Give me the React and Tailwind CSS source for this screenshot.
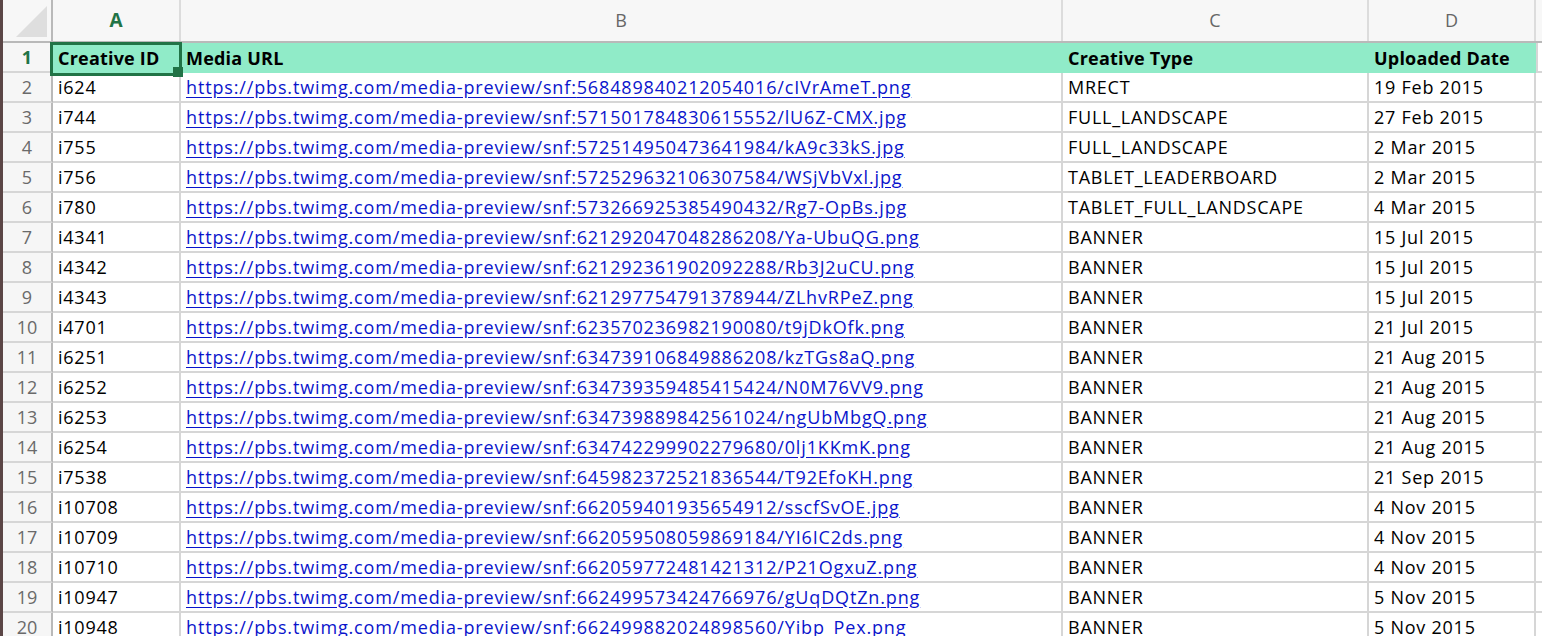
import React from "react";

const rows = [
  ["i624", "568489840212054016/cIVrAmeT.png", "MRECT", "19 Feb 2015"],
  ["i744", "571501784830615552/lU6Z-CMX.jpg", "FULL_LANDSCAPE", "27 Feb 2015"],
  ["i755", "572514950473641984/kA9c33kS.jpg", "FULL_LANDSCAPE", "2 Mar 2015"],
  ["i756", "572529632106307584/WSjVbVxl.jpg", "TABLET_LEADERBOARD", "2 Mar 2015"],
  ["i780", "573266925385490432/Rg7-OpBs.jpg", "TABLET_FULL_LANDSCAPE", "4 Mar 2015"],
  ["i4341", "621292047048286208/Ya-UbuQG.png", "BANNER", "15 Jul 2015"],
  ["i4342", "621292361902092288/Rb3J2uCU.png", "BANNER", "15 Jul 2015"],
  ["i4343", "621297754791378944/ZLhvRPeZ.png", "BANNER", "15 Jul 2015"],
  ["i4701", "623570236982190080/t9jDkOfk.png", "BANNER", "21 Jul 2015"],
  ["i6251", "634739106849886208/kzTGs8aQ.png", "BANNER", "21 Aug 2015"],
  ["i6252", "634739359485415424/N0M76VV9.png", "BANNER", "21 Aug 2015"],
  ["i6253", "634739889842561024/ngUbMbgQ.png", "BANNER", "21 Aug 2015"],
  ["i6254", "634742299902279680/0lj1KKmK.png", "BANNER", "21 Aug 2015"],
  ["i7538", "645982372521836544/T92EfoKH.png", "BANNER", "21 Sep 2015"],
  ["i10708", "662059401935654912/sscfSvOE.jpg", "BANNER", "4 Nov 2015"],
  ["i10709", "662059508059869184/YI6IC2ds.png", "BANNER", "4 Nov 2015"],
  ["i10710", "662059772481421312/P21OgxuZ.png", "BANNER", "4 Nov 2015"],
  ["i10947", "662499573424766976/gUqDQtZn.png", "BANNER", "5 Nov 2015"],
  ["i10948", "662499882024898560/Yibp_Pex.png", "BANNER", "5 Nov 2015"],
];

const font = "font-['Open_Sans',sans-serif]";

// normal grid cell: grid lines on the right and bottom
const Cell = ({ w, children, className = "" }) => (
  <div
    className={`${w} shrink-0 h-full flex items-center pl-[5px] border-r-2 border-b-2 border-[#d6d6d6] overflow-hidden whitespace-nowrap tracking-[0.75px] ${className}`}
  >
    {children}
  </div>
);

// filled header cell: the fill hides the grid lines
const HeadCell = ({ w, children }) => (
  <div
    className={`${w} shrink-0 h-full flex items-center pl-[5px] bg-[#90ebc8] font-bold tracking-[0.2px] whitespace-nowrap overflow-hidden`}
  >
    {children}
  </div>
);

const RowHead = ({ children, active }) => (
  <div
    className={`w-[50px] shrink-0 h-full flex items-center justify-center bg-[#f6f6f6] border-r-2 border-b-2 border-b-[#d6d6d6] border-r-[#b9b9b9] ${
      active ? "text-[#217346] font-bold" : "text-[#6a6a6a]"
    }`}
  >
    {children}
  </div>
);

const ColHead = ({ w, children, active }) => (
  <div
    className={`${w} shrink-0 h-full flex items-center justify-center border-r-2 border-[#dcdcdc] ${
      active ? "text-[#217346] font-bold text-[19px]" : "text-[#666]"
    }`}
  >
    {children}
  </div>
);

export default function App() {
  return (
    <div className={`w-[1542px] h-[636px] overflow-hidden flex bg-white text-[18px] text-black ${font}`}>
      {/* window edge */}
      <div className="w-[3px] shrink-0 bg-[#5b4646]" />

      <div className="flex-1 flex flex-col">
        {/* column letters */}
        <div className="h-[43px] shrink-0 flex bg-[#f7f7f7] border-b-2 border-[#b9b9b9]">
          <div className="w-[50px] shrink-0 h-full border-r-2 border-[#b9b9b9] flex items-end justify-end pr-[4px] pb-[4px]">
            <svg width="31" height="31" viewBox="0 0 31 31">
              <polygon points="31,0 31,31 0,31" fill="#dedede" />
            </svg>
          </div>
          <ColHead w="w-[128px]" active>A</ColHead>
          <ColHead w="w-[882px]">B</ColHead>
          <ColHead w="w-[306px]">C</ColHead>
          <ColHead w="w-[167px]">D</ColHead>
          <div className="flex-1" />
        </div>

        {/* header row */}
        <div className="h-[30px] shrink-0 flex">
          <RowHead active>1</RowHead>
          <div className="relative w-[128px] shrink-0 h-full">
            <HeadCell w="w-full">Creative ID</HeadCell>
            <div className="absolute left-[-3px] top-[-1px] w-[132px] h-[34px] border-[3px] border-[#217346]" />
            <div className="absolute left-[120px] top-[24px] w-[10px] h-[10px] bg-[#217346]" />
          </div>
          <HeadCell w="w-[882px]">Media URL</HeadCell>
          <HeadCell w="w-[306px]">Creative Type</HeadCell>
          <HeadCell w="w-[167px]">Uploaded Date</HeadCell>
          <div className="flex-1 h-full border-l-2 border-b-2 border-[#d6d6d6]" />
        </div>

        {rows.map((r, i) => (
          <div key={i} className="h-[30px] shrink-0 flex">
            <RowHead>{i + 2}</RowHead>
            <Cell w="w-[128px]">{r[0]}</Cell>
            <Cell w="w-[882px]">
              <span className="text-[#0a14cc] underline underline-offset-[3px] tracking-[0.85px]">
                https://pbs.twimg.com/media-preview/snf:{r[1]}
              </span>
            </Cell>
            <Cell w="w-[306px]">{r[2]}</Cell>
            <Cell w="w-[167px]">{r[3]}</Cell>
            <div className="flex-1 h-full border-b-2 border-[#d6d6d6]" />
          </div>
        ))}
      </div>
    </div>
  );
}
